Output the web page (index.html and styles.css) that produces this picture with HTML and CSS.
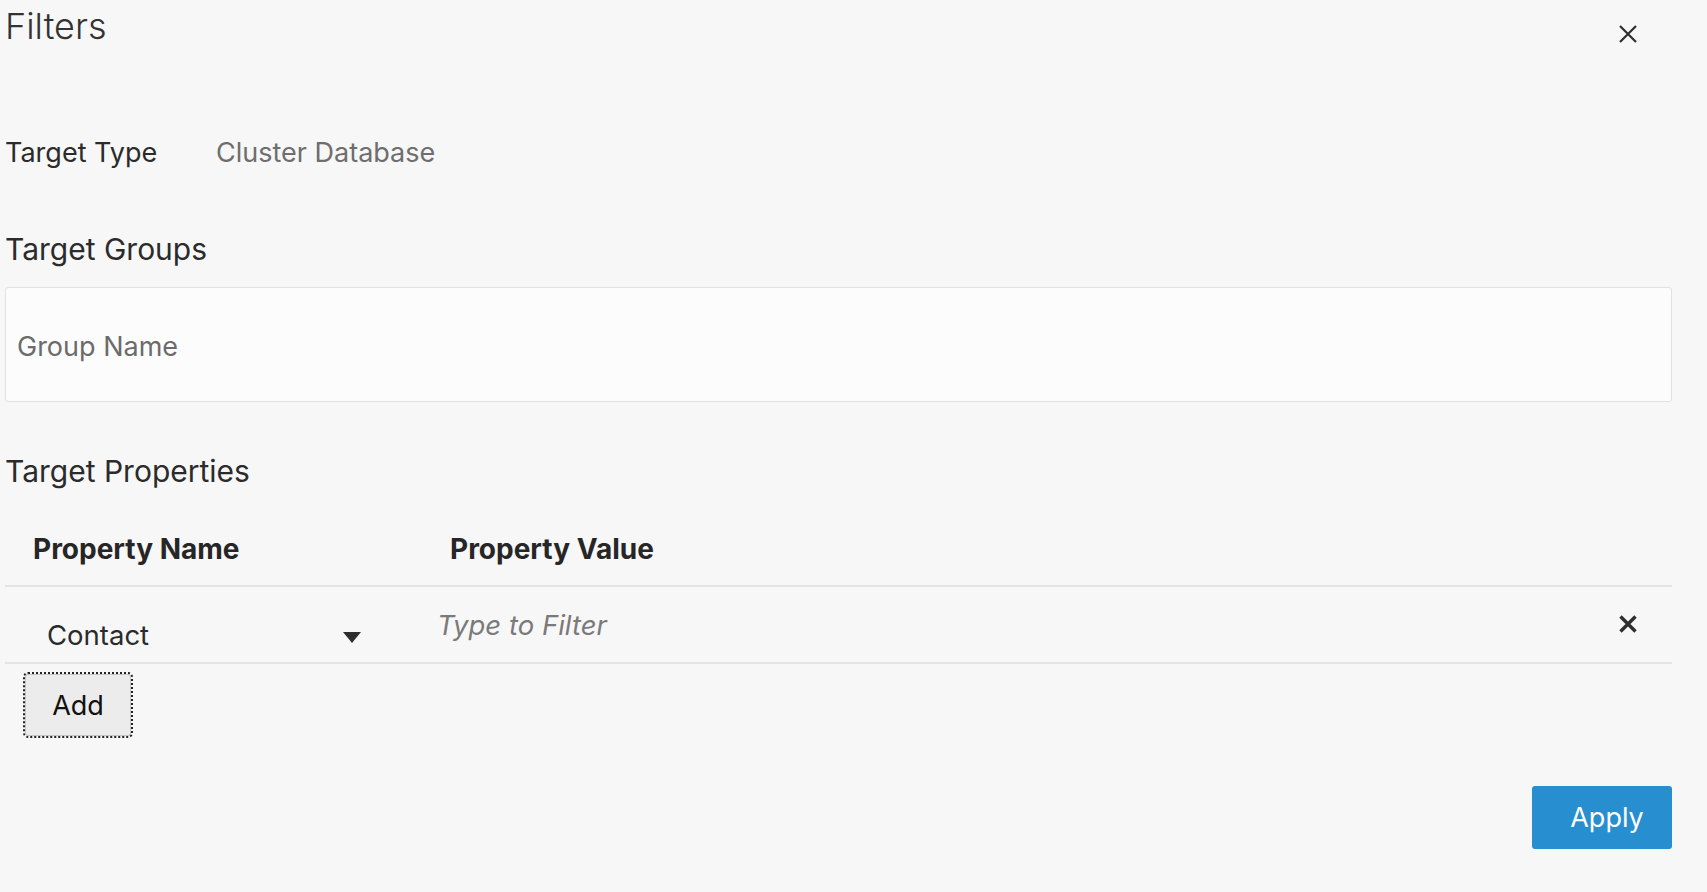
FILE: index.html
```html
<!DOCTYPE html>
<html lang="en">
  <head>
    <meta charset="UTF-8" />
    <meta name="viewport" content="width=device-width, initial-scale=1.0" />
    <title>Filters</title>
    <link rel="stylesheet" href="styles.css">
  </head>
  <body>
    <div class="panel">
      <div class="header">
        <h1 class="title">Filters</h1>
        <button class="close" aria-label="Close">
          <svg width="20" height="20" viewBox="0 0 20 20">
            <path d="M2 2 L18 18 M18 2 L2 18" stroke="#2e2e2e" stroke-width="2.2" fill="none" />
          </svg>
        </button>
      </div>

      <div class="type-row">
        <span class="type-label">Target Type</span>
        <span class="type-value">Cluster Database</span>
      </div>

      <h2 class="section-title groups-title">Target Groups</h2>
      <div class="group-box">
        <span class="placeholder">Group Name</span>
      </div>

      <h2 class="section-title props-title">Target Properties</h2>
      <div class="prop-table">
        <div class="prop-head">
          <div class="head-name">Property Name</div>
          <div class="head-value">Property Value</div>
          <div></div>
        </div>
        <div class="prop-row">
          <div class="select">
            <span>Contact</span>
            <span class="caret"></span>
          </div>
          <div class="filter">Type to Filter</div>
          <button class="remove" aria-label="Remove">
            <svg width="20" height="20" viewBox="0 0 20 20">
              <path d="M2.5 2.5 L17.5 17.5 M17.5 2.5 L2.5 17.5" stroke="#2e2e2e" stroke-width="3.4" fill="none" />
            </svg>
          </button>
        </div>
      </div>
      <button class="add">Add</button>

      <div class="footer">
        <button class="apply">Apply</button>
      </div>
    </div>
  </body>
</html>
```

FILE: styles.css
```css
body {
  margin: 0;
  background-color: #f7f7f7;
  font-family: Inter, "Liberation Sans", sans-serif;
  color: #2b2b2b;
}
.panel {
  width: 1667px;
  padding-left: 5px;
}
.header {
  display: flex;
  justify-content: space-between;
  align-items: flex-start;
  height: 80px;
}
.title {
  margin: 8px 0 0;
  font-size: 36px;
  line-height: 37px;
  font-weight: 300;
  color: #333;
}
.close {
  margin: 24px 34px 0 0;
  padding: 0;
  width: 20px;
  height: 20px;
  border: none;
  background: none;
}
.close svg, .remove svg {
  display: block;
}
.type-row {
  margin-top: 53px;
  display: flex;
  font-size: 27px;
  line-height: 40px;
}
.type-label {
  width: 211px;
}
.type-value {
  color: #6e6e6e;
}
.section-title {
  margin: 0;
  font-size: 30px;
  line-height: 40px;
  font-weight: 400;
}
.groups-title {
  margin-top: 56px;
}
.group-box {
  margin-top: 18px;
  height: 115px;
  border: 1px solid #e1e1e1;
  border-radius: 3px;
  background-color: #fcfcfc;
  display: flex;
  align-items: center;
  padding: 3px 0 0 11px;
  box-sizing: border-box;
}
.placeholder {
  font-size: 27px;
  color: #6b6b6b;
}
.props-title {
  margin-top: 49px;
}
.prop-table {
  margin-top: 38px;
}
.prop-head, .prop-row {
  display: grid;
  grid-template-columns: 420px 1fr 60px;
  border-bottom: 2px solid #e4e4e4;
}
.prop-head {
  height: 56px;
  font-size: 28px;
  font-weight: 700;
  line-height: 40px;
  color: #262626;
}
.head-name {
  padding-left: 28px;
}
.head-value {
  padding-left: 25px;
}
.prop-row {
  height: 75px;
  align-items: center;
}
.select {
  margin-left: 42px;
  width: 314px;
  display: flex;
  justify-content: space-between;
  align-items: center;
  font-size: 27.5px;
  padding-top: 20px;
}
.caret {
  width: 0;
  height: 0;
  border-left: 9px solid transparent;
  border-right: 9px solid transparent;
  border-top: 11px solid #2e2e2e;
  margin-top: 6px;
}
.filter {
  padding-left: 12px;
  font-size: 27.5px;
  font-style: italic;
  color: #7a7a7a;
  margin-top: 1px;
}
.remove {
  padding: 0;
  margin: -2px 0 0 6px;
  width: 20px;
  height: 20px;
  border: none;
  background: none;
}
.add {
  margin: 10px 0 0 20px;
  width: 106px;
  height: 62px;
  font-family: inherit;
  font-size: 27px;
  color: #111;
  background-color: #ececec;
  border: 1px solid #c4c4c4;
  border-radius: 3px;
  outline: 2px dotted #222;
  outline-offset: 0;
}
.footer {
  display: flex;
  justify-content: flex-end;
  margin-top: 50px;
}
.apply {
  width: 140px;
  height: 63px;
  padding: 0 0 0 10px;
  font-family: inherit;
  font-size: 27px;
  color: #fff;
  background-color: #278ed0;
  border: none;
  border-radius: 3px;
}
```
